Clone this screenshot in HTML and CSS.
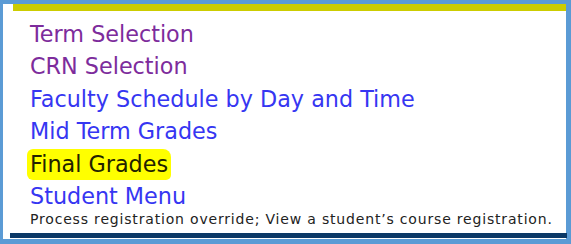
FILE: index.html
```
<!DOCTYPE html>
<html lang="en">
<head>
<meta charset="utf-8">
<title>Faculty Services</title>
<link rel="stylesheet" href="styles.css">
</head>
<body>
<div class="frame">
  <div class="topbar"></div>
  <ul class="menu">
    <li><a class="link visited" href="#">Term Selection</a></li>
    <li><a class="link visited" href="#">CRN Selection</a></li>
    <li><a class="link" href="#">Faculty Schedule by Day and Time</a></li>
    <li><a class="link" href="#">Mid Term Grades</a></li>
    <li><a class="link highlight" href="#">Final Grades</a></li>
    <li><a class="link" href="#">Student Menu</a></li>
  </ul>
  <p class="desc">Process registration override; View a student’s course registration.</p>
  <div class="bottombar"></div>
</div>
</body>
</html>
```
FILE: styles.css
```
html, body {
  margin: 0;
  padding: 0;
  background: #ffffff;
}
.frame {
  box-sizing: border-box;
  width: 571px;
  height: 244px;
  border-style: solid;
  border-color: #5b9bd5;
  border-width: 4px 5px 5px 3px;
  background: #ffffff;
  display: flex;
  flex-direction: column;
  font-family: "DejaVu Sans", Verdana, sans-serif;
}
.topbar {
  height: 7px;
  margin-left: 10px;
  background: #cccc00;
}
.menu {
  list-style: none;
  margin: 7px 0 0 0;
  padding: 0 0 0 27px;
  font-size: 22.3px;
  line-height: 32.4px;
}
.link {
  text-decoration: none;
  color: #3636f2;
}
.link.visited {
  color: #7d2c9c;
}
.link.highlight {
  color: #222200;
  background: #ffff00;
  padding: 2px 3px 3px 3px;
  margin-left: -3px;
  border-radius: 6px 8px 5px 6px;
}
.desc {
  margin: 0;
  padding-left: 27px;
  font-size: 14px;
  line-height: 15px;
  letter-spacing: 0.82px;
  color: #222222;
}
.bottombar {
  height: 5px;
  margin: 6px -1px 0 7px;
  background: #0b3866;
}
```
